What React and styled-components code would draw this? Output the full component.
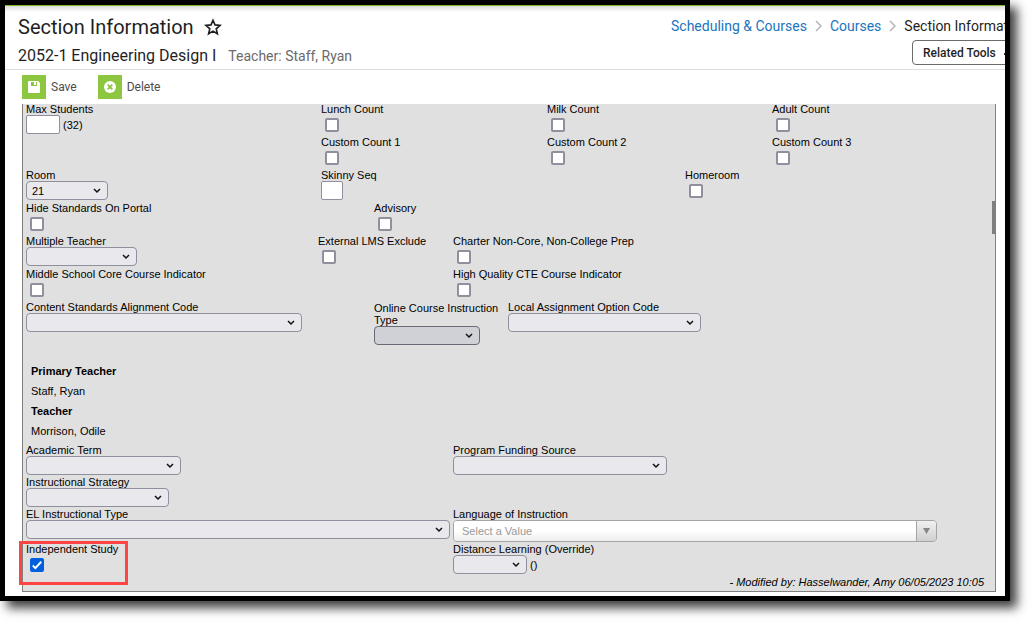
import React from "react";
import styled, { createGlobalStyle, css } from "styled-components";

const GlobalStyle = createGlobalStyle`
  *, *::before, *::after { box-sizing: border-box; }
  body { margin: 0; background: #fff; }
`;

const Page = styled.div`
  padding: 0 25px 25px 0;
`;

const Frame = styled.div`
  border: 5px solid #000;
  background: #fff;
  box-shadow: 7px 7px 10px rgba(0, 0, 0, 0.75);
`;

const Header = styled.header`
  display: flex;
  justify-content: space-between;
  height: 65px;
  border-top: 1px solid #7db928;
  border-bottom: 1px solid #dedede;
  background: linear-gradient(#dcdcdc, #fff 6px);
  color: #1f1f1f;
  font-family: Roboto, sans-serif;
`;

const Titles = styled.div`
  padding: 9px 0 0 13px;
  white-space: nowrap;
`;

const Title = styled.h1`
  display: flex;
  align-items: center;
  gap: 10px;
  margin: 0;
  font-size: 20px;
  font-weight: 400;
  line-height: 24px;
`;

const StarButton = styled.button`
  display: flex;
  padding: 0;
  border: 0;
  background: none;
  color: inherit;
`;

const Subtitle = styled.div`
  display: flex;
  align-items: baseline;
  gap: 12px;
  margin-top: 4px;
  font-size: 16px;
  line-height: 26px;
`;

const TeacherNote = styled.span`
  color: #6b6b6b;
  font-size: 14px;
`;

const HeaderSide = styled.div`
  display: flex;
  flex-direction: column;
  flex: 0 0 334px;
  gap: 4px;
  overflow: hidden;
  padding-top: 10px;
`;

const Breadcrumb = styled.nav`
  display: flex;
  align-items: center;
  gap: 8px;
  font-size: 14px;
  line-height: 20px;
  white-space: nowrap;

  a { color: #1b75bc; text-decoration: none; }
  svg { flex: none; }
`;

const RelatedButton = styled.button`
  display: flex;
  flex: none;
  align-items: center;
  gap: 8px;
  width: 120px;
  height: 25px;
  margin-left: 241px;
  padding: 0 10px;
  border: 1px solid #6b6b6b;
  border-radius: 4px;
  background: #fff;
  color: #1f1f1f;
  font: 500 12px Roboto, sans-serif;
  white-space: nowrap;
`;

const Toolbar = styled.div`
  display: flex;
  gap: 21px;
  height: 34px;
  padding: 5px 17px;
`;

const ToolButton = styled.button`
  display: flex;
  align-items: center;
  gap: 5px;
  height: 24px;
  padding: 0;
  border: 0;
  background: none;
  color: #4d4d4d;
  font: 12px Roboto, sans-serif;
`;

const ToolIcon = styled.span`
  display: grid;
  place-items: center;
  width: 24px;
  height: 24px;
  background: #8dc63f;
`;

const Panel = styled.form`
  position: relative;
  margin: 0 9px 4px 17px;
  padding-left: 3px;
  border: 1px solid #808080;
  border-top: 0;
  background: #e0e0e0;
  color: #000;
  font: 11px "Liberation Sans", Arial, sans-serif;
`;

const ScrollThumb = styled.div`
  position: absolute;
  top: 97px;
  right: 0;
  width: 3px;
  height: 33px;
  background: #7f7f7f;
`;

const Rows = styled.div`
  display: flex;
  flex-direction: column;
  gap: ${(p) => p.$gap}px;
`;

const Row = styled.div`
  display: grid;
  grid-template-columns: ${(p) => p.$columns.map((c) => `minmax(0, ${c}fr)`).join(" ")};
`;

const Cell = styled.div`
  position: relative;
  grid-column: ${(p) => p.$column || "auto"};
  min-height: 30px;
`;

const Label = styled.label`
  display: block;
  width: ${(p) => (p.$wrap ? "132px" : "auto")};
  line-height: ${(p) => (p.$wrap ? 12 : 11)}px;
  white-space: ${(p) => (p.$wrap ? "normal" : "nowrap")};
`;

const ControlLine = styled.div`
  display: flex;
  align-items: center;
  gap: 3px;
`;

const TextInput = styled.input`
  width: ${(p) => p.$width}px;
  height: 19px;
  padding: 0 4px;
  border: 1px solid #8f8f9d;
  border-radius: 2px;
  background: #fff;
  font: inherit;
`;

const SelectBox = styled.div`
  position: relative;
  width: ${(p) => p.$width}px;
  max-width: 100%;
  height: 19px;

  svg {
    position: absolute;
    top: 7px;
    right: 7px;
    pointer-events: none;
  }
`;

const SelectInput = styled.select`
  display: block;
  width: 100%;
  height: 100%;
  padding: 0 20px 0 5px;
  border: 1px solid #8f8f9d;
  border-radius: 4px;
  background: #e9e9ed;
  color: #000;
  font: inherit;
  appearance: none;
  opacity: 1;

  ${(p) => p.disabled && css`
    border-color: #6a6a75;
    background: #d0d0d7;
  `}
`;

const CheckBox = styled.span`
  position: relative;
  display: block;
  width: 14px;
  height: 14px;
  margin: 3px 4px 0;

  svg {
    position: absolute;
    inset: 0;
    pointer-events: none;
  }
`;

const CheckInput = styled.input`
  display: block;
  width: 14px;
  height: 14px;
  margin: 0;
  border: 2px solid #8f8f9d;
  border-radius: 2px;
  background: #fff;
  appearance: none;

  &:checked { border-color: #0060df; background: #0060df; }
  & + svg { display: none; }
  &:checked + svg { display: block; }
`;

const Combo = styled.div`
  display: flex;
  width: 484px;
  max-width: 100%;
  height: 22px;
  overflow: hidden;
  border: 1px solid #a5a5a5;
  border-radius: 4px;
`;

const ComboInput = styled.input`
  flex: 1;
  min-width: 0;
  padding: 0 8px;
  border: 0;
  background: linear-gradient(#fff 50%, #ededed);
  font: inherit;

  &::placeholder { color: #999; opacity: 1; }
`;

const ComboButton = styled.button`
  display: grid;
  place-items: center;
  width: 20px;
  padding: 0;
  border: 0;
  border-left: 1px solid #a5a5a5;
  background: linear-gradient(#f0f0f0, #cfcfcf);
`;

const Teachers = styled.dl`
  margin: 16px 0 4px;
  padding-left: 5px;
  line-height: 20px;

  dt { font-weight: 700; }
  dd { margin: 0; }
`;

const Highlight = styled.div`
  position: absolute;
  top: -3px;
  left: -7px;
  width: 109px;
  height: 44px;
  border: 3px solid #ff4444;
  pointer-events: none;
`;

const Modified = styled.p`
  margin: 0;
  padding-right: 11px;
  font-style: italic;
  line-height: 17px;
  text-align: right;
`;

const Chevron = () => (
  <svg width="8" height="6" viewBox="0 0 8 6" fill="none" stroke="#111" strokeWidth="1.5">
    <path d="M1 1l3 3 3-3" />
  </svg>
);

const CrumbArrow = () => (
  <svg width="7" height="12" viewBox="0 0 7 12" fill="none" stroke="#b5b5b5" strokeWidth="1.5">
    <path d="M1 1l5 5-5 5" />
  </svg>
);

function Check({ id, label, column, checked, highlight }) {
  return (
    <Cell $column={column}>
      <Label htmlFor={id}>{label}</Label>
      <CheckBox>
        <CheckInput id={id} type="checkbox" defaultChecked={checked} />
        <svg width="14" height="14" viewBox="0 0 14 14" fill="none" stroke="#fff" strokeWidth="2">
          <path d="M2.8 7.5l2.6 2.6 5.8-6.3" />
        </svg>
      </CheckBox>
      {highlight && <Highlight />}
    </Cell>
  );
}

function Select({ id, label, column, width, value, disabled, wrap, note }) {
  return (
    <Cell $column={column}>
      <Label htmlFor={id} $wrap={wrap}>{label}</Label>
      <ControlLine>
        <SelectBox $width={width}>
          <SelectInput id={id} disabled={disabled}>
            <option>{value}</option>
          </SelectInput>
          <Chevron />
        </SelectBox>
        {note && <span>{note}</span>}
      </ControlLine>
    </Cell>
  );
}

function Text({ id, label, width, note, column }) {
  return (
    <Cell $column={column}>
      <Label htmlFor={id}>{label}</Label>
      <ControlLine>
        <TextInput id={id} $width={width} />
        {note && <span>{note}</span>}
      </ControlLine>
    </Cell>
  );
}

const counts = [295, 226, 225, 223];

export default function App() {
  return (
    <Page>
      <GlobalStyle />
      <Frame>
        <Header>
          <Titles>
            <Title>
              Section Information
              <StarButton type="button" aria-label="Add to favorites">
                <svg width="18" height="18" viewBox="0 0 18 18" fill="none" stroke="#1f1f1f" strokeWidth="1.6" strokeLinejoin="miter">
                  <path d="M9 2.2l2 4.7 5.1.5-3.9 3.4 1.2 5L9 13.1l-4.4 2.7 1.2-5L1.900 7.400l5.100-.5z" />
                </svg>
              </StarButton>
            </Title>
            <Subtitle>
              2052-1 Engineering Design I
              <TeacherNote>Teacher: Staff, Ryan</TeacherNote>
            </Subtitle>
          </Titles>
          <HeaderSide>
            <Breadcrumb aria-label="Breadcrumb">
              <a href="#scheduling">Scheduling &amp; Courses</a>
              <CrumbArrow />
              <a href="#courses">Courses</a>
              <CrumbArrow />
              <span>Section Information</span>
            </Breadcrumb>
            <RelatedButton type="button">
              Related Tools
              <svg width="10" height="6" viewBox="0 0 10 6" fill="#1f1f1f"><path d="M0 3.500L4 0h2l4 3.500V5H0z" /></svg>
            </RelatedButton>
          </HeaderSide>
        </Header>

        <Toolbar>
          <ToolButton type="button">
            <ToolIcon>
              <svg width="12" height="12" viewBox="0 0 12 12">
                <path fill="#fff" fillRule="evenodd" d="M1 0h9l2 2v9a1 1 0 0 1-1 1H1a1 1 0 0 1-1-1V1a1 1 0 0 1 1-1zM3 1v4h6V1H8v3H6V1z" />
              </svg>
            </ToolIcon>
            Save
          </ToolButton>
          <ToolButton type="button">
            <ToolIcon>
              <svg width="12" height="12" viewBox="0 0 12 12">
                <circle cx="6" cy="6" r="6" fill="#fff" />
                <path d="M3.700 3.700l4.600 4.600M8.300 3.700L3.700 8.300" stroke="#8dc63f" strokeWidth="1.800" />
              </svg>
            </ToolIcon>
            Delete
          </ToolButton>
        </Toolbar>

        <Panel>
          <ScrollThumb />
          <Rows $gap={3}>
            <Row $columns={counts}>
              <Text id="max" label="Max Students" width={34} note="(32)" />
              <Check id="lunch" label="Lunch Count" />
              <Check id="milk" label="Milk Count" />
              <Check id="adult" label="Adult Count" />
            </Row>
            <Row $columns={counts}>
              <Check id="custom1" label="Custom Count 1" column={2} />
              <Check id="custom2" label="Custom Count 2" column={3} />
              <Check id="custom3" label="Custom Count 3" column={4} />
            </Row>
            <Row $columns={[295, 364, 310]}>
              <Select id="room" label="Room" width={82} value="21" />
              <Text id="skinny" label="Skinny Seq" width={22} />
              <Check id="homeroom" label="Homeroom" />
            </Row>
            <Row $columns={[348, 621]}>
              <Check id="hide" label="Hide Standards On Portal" />
              <Check id="advisory" label="Advisory" />
            </Row>
            <Row $columns={[292, 135, 542]}>
              <Select id="multiple" label="Multiple Teacher" width={111} />
              <Check id="lms" label="External LMS Exclude" />
              <Check id="charter" label="Charter Non-Core, Non-College Prep" />
            </Row>
            <Row $columns={[427, 542]}>
              <Check id="middle" label="Middle School Core Course Indicator" />
              <Check id="cte" label="High Quality CTE Course Indicator" />
            </Row>
            <Row $columns={[348, 134, 487]}>
              <Select id="content" label="Content Standards Alignment Code" width={276} />
              <Select id="online" label="Online Course Instruction Type" width={106} disabled wrap />
              <Select id="local" label="Local Assignment Option Code" width={193} />
            </Row>
          </Rows>

          <Teachers>
            <dt>Primary Teacher</dt>
            <dd>Staff, Ryan</dd>
            <dt>Teacher</dt>
            <dd>Morrison, Odile</dd>
          </Teachers>

          <Rows $gap={2}>
            <Row $columns={[427, 542]}>
              <Select id="term" label="Academic Term" width={155} />
              <Select id="funding" label="Program Funding Source" width={214} />
            </Row>
            <Row $columns={[427, 542]}>
              <Select id="strategy" label="Instructional Strategy" width={143} />
            </Row>
            <Row $columns={[427, 542]}>
              <Select id="el" label="EL Instructional Type" width={424} />
              <Cell>
                <Label htmlFor="language">Language of Instruction</Label>
                <Combo>
                  <ComboInput id="language" placeholder="Select a Value" />
                  <ComboButton type="button" aria-label="Show languages">
                    <svg width="7" height="6" viewBox="0 0 7 6" fill="#858585"><path d="M0 0h7L3.500 6z" /></svg>
                  </ComboButton>
                </Combo>
              </Cell>
            </Row>
            <Row $columns={[427, 542]}>
              <Check id="independent" label="Independent Study" checked highlight />
              <Select id="distance" label="Distance Learning (Override)" width={74} note="()" />
            </Row>
          </Rows>
          <Modified>- Modified by: Hasselwander, Amy 06/05/2023 10:05</Modified>
        </Panel>
      </Frame>
    </Page>
  );
}
